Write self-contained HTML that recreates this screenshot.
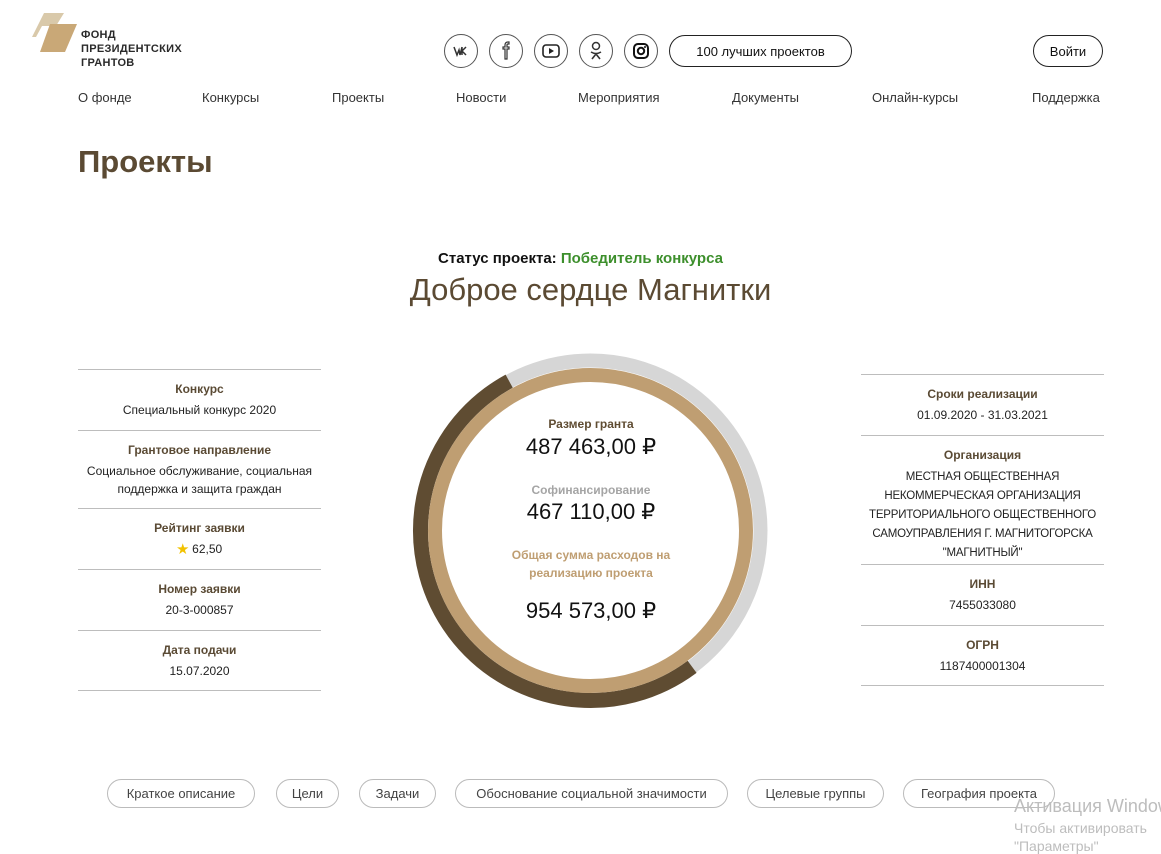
<!DOCTYPE html>
<html><head><meta charset="utf-8">
<style>
*{margin:0;padding:0;box-sizing:border-box}
body{width:1161px;height:845px;overflow:hidden;background:#fff;font-family:"Liberation Sans","Noto Sans CJK SC",sans-serif;color:#111;position:relative}
.a{position:absolute;white-space:nowrap}
.nav{top:90px;font-size:13px;color:#333}
.ic{position:absolute;top:34px;width:34px;height:34px;border:1px solid #555;border-radius:50%}
.pill{position:absolute;border:1px solid #222;border-radius:17px;font-size:13px;display:flex;align-items:center;justify-content:center}
.col{position:absolute;width:243px;text-align:center}
.cell{border-top:1px solid #bdbdbd;padding:12px 4px 0}
.cell b{display:block;font-size:12px;color:#5a4a34;margin-bottom:5px}
.cell span{font-size:12px;line-height:17px;color:#222}
.btn{position:absolute;top:779px;height:29px;border:1px solid #bbb;border-radius:15px;font-size:13px;color:#444;display:flex;align-items:center;justify-content:center}
.ct{position:absolute;left:430px;width:322px;text-align:center}
</style></head><body>
<svg class="a" style="left:32px;top:12px" width="48" height="42" viewBox="0 0 48 42">
<path d="M12 1 H32 L24 14 H10 L4 25 H0 Z" fill="#d9c9aa"/>
<path d="M18 12 H45 L33 40 H8 Z" fill="#c9a877"/>
</svg>
<div class="a" style="left:81px;top:28px;font-size:11px;font-weight:bold;line-height:14px;color:#2a2a2a;letter-spacing:0.3px">ФОНД<br>ПРЕЗИДЕНТСКИХ<br>ГРАНТОВ</div>

<div class="ic" style="left:444px"><svg width="32" height="32" viewBox="0 0 32 32"><path d="M9 12 L12 20 L14 15 L15 20 L17 12 M17 12 V20 M17 16 L21 12 M17 16 L21 20" fill="none" stroke="#333" stroke-width="1.5"/></svg></div>
<div class="ic" style="left:489px"><svg width="32" height="32" viewBox="0 0 32 32"><path d="M15 24 V14 H13 V12 H15 V10 Q15 7 18 7 H19 V9 H18 Q17 9 17 10 V12 H19 V14 H17 V24 Z" fill="none" stroke="#333" stroke-width="1.2"/></svg></div>
<div class="ic" style="left:534px"><svg width="32" height="32" viewBox="0 0 32 32"><rect x="8" y="10" width="16" height="12" rx="3" fill="none" stroke="#222" stroke-width="1.6"/><path d="M14 13 L19 16 L14 19 Z" fill="#222"/></svg></div>
<div class="ic" style="left:579px"><svg width="32" height="32" viewBox="0 0 32 32"><circle cx="16" cy="11" r="3.5" fill="none" stroke="#333" stroke-width="1.5"/><path d="M11 17 Q16 20 21 17 M16 19 L12 24 M16 19 L20 24" fill="none" stroke="#333" stroke-width="1.6"/></svg></div>
<div class="ic" style="left:624px"><svg width="32" height="32" viewBox="0 0 32 32"><rect x="9" y="9" width="14" height="14" rx="4" fill="none" stroke="#111" stroke-width="2"/><circle cx="16" cy="16" r="3.2" fill="none" stroke="#111" stroke-width="2"/><circle cx="20" cy="12" r="1" fill="#111"/></svg></div>
<div class="pill" style="left:669px;top:35px;width:183px;height:32px">100 лучших проектов</div>
<div class="pill" style="left:1033px;top:35px;width:70px;height:32px">Войти</div>

<div class="a nav" style="left:78px">О фонде</div>
<div class="a nav" style="left:202px">Конкурсы</div>
<div class="a nav" style="left:332px">Проекты</div>
<div class="a nav" style="left:456px">Новости</div>
<div class="a nav" style="left:578px">Мероприятия</div>
<div class="a nav" style="left:732px">Документы</div>
<div class="a nav" style="left:872px">Онлайн-курсы</div>
<div class="a nav" style="left:1032px">Поддержка</div>

<div class="a" style="left:78px;top:144px;font-size:31px;font-weight:bold;color:#5b4a33">Проекты</div>
<div class="a" style="left:0;width:1161px;top:250px;text-align:center;font-size:15px;font-weight:bold">Статус проекта: <span style="color:#3d8f2c">Победитель конкурса</span></div>
<div class="a" style="left:0;width:1181px;top:272px;text-align:center;font-size:31px;color:#5b4a33">Доброе сердце Магнитки</div>

<div class="col" style="left:78px;top:369px">
<div class="cell" style="height:61px"><b>Конкурс</b><span>Специальный конкурс 2020</span></div>
<div class="cell" style="height:78px"><b>Грантовое направление</b><span>Социальное обслуживание, социальная поддержка и защита граждан</span></div>
<div class="cell" style="height:61px"><b>Рейтинг заявки</b><span><span style="color:#f2c200">★</span> 62,50</span></div>
<div class="cell" style="height:61px"><b>Номер заявки</b><span>20-3-000857</span></div>
<div class="cell" style="height:61px;border-bottom:1px solid #bdbdbd"><b>Дата подачи</b><span>15.07.2020</span></div>
</div>

<div class="col" style="left:861px;top:374px">
<div class="cell" style="height:61px"><b>Сроки реализации</b><span>01.09.2020 - 31.03.2021</span></div>
<div class="cell" style="height:129px;padding:12px 0 0"><b>Организация</b><span style="font-size:11.5px;letter-spacing:-0.2px">МЕСТНАЯ ОБЩЕСТВЕННАЯ<br>НЕКОММЕРЧЕСКАЯ ОРГАНИЗАЦИЯ<br>ТЕРРИТОРИАЛЬНОГО ОБЩЕСТВЕННОГО<br>САМОУПРАВЛЕНИЯ Г. МАГНИТОГОРСКА<br>"МАГНИТНЫЙ"</span></div>
<div class="cell" style="height:61px"><b>ИНН</b><span>7455033080</span></div>
<div class="cell" style="height:61px;border-bottom:1px solid #bdbdbd"><b>ОГРН</b><span>1187400001304</span></div>
</div>

<svg class="a" style="left:0;top:0" width="1161" height="845">
<circle cx="590.5" cy="530.5" r="170" fill="none" stroke="#d6d6d6" stroke-width="14"/>
<circle cx="590.5" cy="530.5" r="170" fill="none" stroke="#5f4c32" stroke-width="15" stroke-dasharray="558 600" transform="rotate(53.3 590.5 530.5)"/>
<circle cx="590.5" cy="530.5" r="155.5" fill="none" stroke="#bf9e72" stroke-width="14"/>
</svg>
<div class="ct" style="top:417px;font-size:12px;font-weight:bold;color:#5f4c32">Размер гранта</div>
<div class="ct" style="top:434px;font-size:22px">487 463,00 ₽</div>
<div class="ct" style="top:483px;font-size:12px;font-weight:bold;color:#a5a5a5">Софинансирование</div>
<div class="ct" style="top:499px;font-size:22px">467 110,00 ₽</div>
<div class="ct" style="top:546px;font-size:12px;font-weight:bold;color:#bf9e72;line-height:18px;white-space:normal;left:505px;width:172px">Общая сумма расходов на реализацию проекта</div>
<div class="ct" style="top:598px;font-size:22px">954 573,00 ₽</div>

<div class="btn" style="left:107px;width:148px">Краткое описание</div>
<div class="btn" style="left:276px;width:63px">Цели</div>
<div class="btn" style="left:359px;width:77px">Задачи</div>
<div class="btn" style="left:455px;width:273px">Обоснование социальной значимости</div>
<div class="btn" style="left:747px;width:137px">Целевые группы</div>
<div class="btn" style="left:903px;width:152px">География проекта</div>

<div class="a" style="left:1014px;top:796px;font-size:18px;color:#bdbdbd">Активация Windows</div>
<div class="a" style="left:1014px;top:820px;font-size:14px;color:#bdbdbd">Чтобы активировать</div>
<div class="a" style="left:1014px;top:838px;font-size:14px;color:#bdbdbd">"Параметры"</div>
</body></html>
